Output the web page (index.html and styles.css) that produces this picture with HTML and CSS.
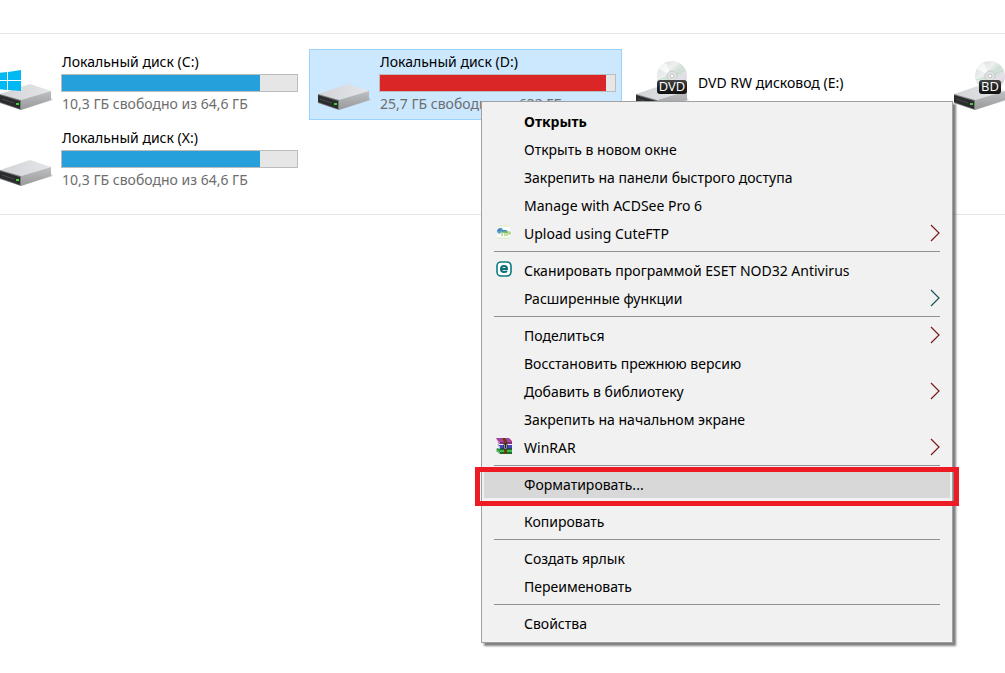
FILE: index.html
```
<!DOCTYPE html>
<html lang="ru">
<head>
<meta charset="utf-8">
<title>Этот компьютер</title>
<link rel="stylesheet" href="styles.css">
</head>
<body>
<svg class="defs" aria-hidden="true">
  <defs>
    <linearGradient id="side" x1="0" y1="0" x2="0" y2="1"><stop offset="0" stop-color="#bfc0c2"/><stop offset="1" stop-color="#98999b"/></linearGradient>
    <linearGradient id="top" x1="0" y1="0" x2="1" y2="0"><stop offset="0" stop-color="#d3d4d7"/><stop offset="1" stop-color="#e4e5e8"/></linearGradient>
    <linearGradient id="disc" x1="0" y1="0" x2="1" y2="1"><stop offset="0" stop-color="#d5d9d9"/><stop offset=".35" stop-color="#eef0f0"/><stop offset=".5" stop-color="#cfe0d6"/><stop offset=".7" stop-color="#e6dfea"/><stop offset="1" stop-color="#c4c8c8"/></linearGradient>
    <linearGradient id="badge" x1="0" y1="0" x2="0" y2="1"><stop offset="0" stop-color="#444"/><stop offset=".5" stop-color="#222"/><stop offset="1" stop-color="#111"/></linearGradient>
    <symbol id="drive" viewBox="0 0 54 52">
      <path d="M22 50l32-10-2-2z" fill="#999" opacity=".4"/>
      <path d="M1 34L31 24L52 31L22 40z" fill="url(#top)"/>
      <path d="M22 40L52 31V40L22 50z" fill="url(#side)"/>
      <path d="M1 34L22 40V50L1 43z" fill="#77797b"/>
      <path d="M1 35L21 41V49L1 42z" fill="#2b2c2d"/>
      <path d="M3 39L15 43" stroke="#484a4b"/>
      <rect x="17" y="43" width="3" height="2" fill="#3fd32f"/>
    </symbol>
    <symbol id="cd" viewBox="0 0 54 52">
      <circle cx="37" cy="16" r="15" fill="url(#disc)"/>
      <path d="M37 16L24 9Q27 4 31 3zM37 16L49 24Q45 29 42 30z" fill="#fff" opacity=".65"/>
      <path d="M37 16L51 10M37 16L23 20" stroke="#a8dfb8" opacity=".6"/>
      <circle cx="37" cy="16" r="5" fill="#e2e4e4" stroke="#c9cccc"/>
      <circle cx="37" cy="16" r="2" fill="#fff" stroke="#bbb"/>
    </symbol>
  </defs>
</svg>
<main class="explorer">
  <section class="drives">
    <article class="tile">
      <svg class="icon" viewBox="0 0 54 52" aria-hidden="true"><use href="#drive"/><path d="M-1 13L8 12V20H-1zM9 12L22 10V20H9zM-1 21H8V30L-1 29zM9 21H22V31L9 30z" fill="#00b9f2"/></svg>
      <div class="info"><h2 class="name">Локальный диск (C:)</h2><div class="bar"><span class="fill" style="width:84.4%"></span></div><p class="free">10,3 ГБ свободно из 64,6 ГБ</p></div>
    </article>
    <article class="tile selected">
      <svg class="icon" viewBox="0 0 54 52" aria-hidden="true"><use href="#drive"/></svg>
      <div class="info"><h2 class="name">Локальный диск (D:)</h2><div class="bar"><span class="fill full" style="width:96%"></span></div><p class="free">25,7 ГБ свободно из 632 ГБ</p></div>
    </article>
    <article class="tile">
      <svg class="icon" viewBox="0 0 54 52" aria-hidden="true"><use href="#drive"/><use href="#cd"/><rect x="22" y="20" width="30" height="14" rx="3" fill="url(#badge)"/><text class="label" x="37" y="31">DVD</text></svg>
      <div class="info"><h2 class="name">DVD RW дисковод (E:)</h2></div>
    </article>
    <article class="tile">
      <svg class="icon" viewBox="0 0 54 52" aria-hidden="true"><use href="#drive"/><use href="#cd"/><rect x="26" y="20" width="22" height="14" rx="3" fill="url(#badge)"/><text class="label" x="37" y="31">BD</text></svg>
    </article>
    <article class="tile">
      <svg class="icon" viewBox="0 0 54 52" aria-hidden="true"><use href="#drive"/></svg>
      <div class="info"><h2 class="name">Локальный диск (X:)</h2><div class="bar"><span class="fill" style="width:84.4%"></span></div><p class="free">10,3 ГБ свободно из 64,6 ГБ</p></div>
    </article>
  </section>

  <div class="menu" role="menu">
    <button class="item default" role="menuitem">Открыть</button>
    <button class="item" role="menuitem">Открыть в новом окне</button>
    <button class="item" role="menuitem">Закрепить на панели быстрого доступа</button>
    <button class="item" role="menuitem">Manage with ACDSee Pro 6</button>
    <button class="item" role="menuitem">
      <svg class="glyph" viewBox="0 0 16 16" aria-hidden="true"><path d="M1 2h13v12H1z" fill="#fbfdf8"/><path d="M1 2h13M1 14h13" stroke="#dcebc4"/><path d="M1 6q2-3 5-2l1 2h4l1 3H8L6 8 3 10 1 8z" fill="#5d9fd3"/><path d="M2 6h3M6 7h4" stroke="#2770b4"/><path d="M5 8h3M6 8v4M8 8h3M9 8v4M11 12V8h3v2h-2" stroke="#8bc34a" fill="none"/></svg>
      Upload using CuteFTP<svg class="arrow" viewBox="0 0 10 18" aria-hidden="true"><path d="M1 1l8 8-8 8"/></svg></button>
    <hr class="rule">
    <button class="item" role="menuitem">
      <svg class="glyph" viewBox="0 0 16 16" aria-hidden="true"><rect x="1" y="1" width="14" height="14" rx="4" fill="#fff" stroke="#0b7c83" stroke-width="1.6"/><path d="M5 8h6q0-3-3-3t-3 3q0 3 3 3 2 0 3-1" fill="none" stroke="#0b6d75" stroke-width="2"/></svg>
      Сканировать программой ESET NOD32 Antivirus</button>
    <button class="item" role="menuitem">Расширенные функции<svg class="arrow teal" viewBox="0 0 10 18" aria-hidden="true"><path d="M1 1l8 8-8 8"/></svg></button>
    <hr class="rule">
    <button class="item" role="menuitem">Поделиться<svg class="arrow" viewBox="0 0 10 18" aria-hidden="true"><path d="M1 1l8 8-8 8"/></svg></button>
    <button class="item" role="menuitem">Восстановить прежнюю версию</button>
    <button class="item" role="menuitem">Добавить в библиотеку<svg class="arrow" viewBox="0 0 10 18" aria-hidden="true"><path d="M1 1l8 8-8 8"/></svg></button>
    <button class="item" role="menuitem">Закрепить на начальном экране</button>
    <button class="item" role="menuitem">
      <svg class="glyph" viewBox="0 0 16 16" aria-hidden="true"><path d="M0 0h13l3 3v3H3z" fill="#a8449c"/><path d="M1 2l3 3h12" stroke="#5a1650" fill="none"/><path d="M1 6l2 1h13v4H4z" fill="#4747b8"/><path d="M0 7l4 3M0 6l4 3" stroke="#fff" stroke-width=".7"/><path d="M1 10l3 1h12v5H4L0 13z" fill="#259b35"/><path d="M4 11h12M4 15h12" stroke="#123e18"/><path d="M4 13h12" stroke="#4ee05e"/><path d="M0 12l4 3M0 1l4 4" stroke="#e9d5e9" stroke-width=".7"/><path d="M6 0h3l2 3v13H8V4z" fill="#6b3a18"/><path d="M8 6h3v5H8z" fill="#ddd" stroke="#222" stroke-width=".8"/><path d="M9.500 6v4" stroke="#222"/></svg>
      WinRAR<svg class="arrow" viewBox="0 0 10 18" aria-hidden="true"><path d="M1 1l8 8-8 8"/></svg></button>
    <hr class="rule">
    <button class="item active" role="menuitem">Форматировать...</button>
    <hr class="rule hidden">
    <button class="item" role="menuitem">Копировать</button>
    <hr class="rule">
    <button class="item" role="menuitem">Создать ярлык</button>
    <button class="item" role="menuitem">Переименовать</button>
    <hr class="rule">
    <button class="item" role="menuitem">Свойства</button>
  </div>
</main>
</body>
</html>
```
FILE: styles.css
```
* { box-sizing: border-box; }
body { margin: 0; background: #fff; color: #000; font: 14px/20px "Noto Sans", "Open Sans", sans-serif; }
.defs { display: block; width: 0; height: 0; }
.explorer { position: relative; min-height: 100vh; padding-top: 33px; overflow: hidden; }
.drives {
  display: grid; grid-template-columns: repeat(4, 313px); gap: 5px;
  margin-left: -9px; padding: 15px 0 18px;
  border: solid #e5e5e5; border-width: 1px 0;
}
.tile { display: flex; gap: 8px; height: 71px; padding: 0 5px 0 7px; border: 1px solid transparent; }
.tile.selected { background: #cce8ff; border-color: #99d1ff; }
.icon { flex: none; width: 54px; height: 52px; margin-top: 10px; overflow: visible; }
.label { fill: #fff; font: 13px "Open Sans", sans-serif; text-anchor: middle; }
.info { flex: 1; display: flex; flex-direction: column; justify-content: center; gap: 2px; padding-bottom: 4px; }
.name, .free { margin: 0; padding-left: 1px; font-size: 14px; font-weight: 400; white-space: nowrap; }
.free { color: #6d6d6d; }
.bar { display: flex; height: 18px; border: 1px solid #bcbcbc; background: #e6e6e6; }
.fill { background: #26a0da; }
.fill.full { background: #da2626; }

.menu {
  position: absolute; left: 481px; top: 101px; width: 472px;
  display: flex; flex-direction: column; padding: 5px 2px;
  background: #f1f1f1; border: 1px solid #a0a0a0;
  box-shadow: 3px 3px 2px rgba(0, 0, 0, .5);
}
.item {
  position: relative; display: flex; align-items: center; height: 28px;
  padding: 2px 10px 0 40px; border: 0; background: none;
  color: #000; font: inherit; text-align: left; white-space: nowrap;
}
.default { font-weight: 700; }
.glyph { position: absolute; left: 12px; top: 5px; width: 16px; height: 16px; }
.arrow { width: 10px; height: 18px; margin: 0 0 2px auto; fill: none; stroke: #7a1a1a; stroke-width: 1.2; }
.teal { stroke: #17565a; }
.rule { width: auto; height: 1px; margin: 4px 10px; border: 0; background: #919191; }
.hidden { visibility: hidden; }
.active { background: #d8d8d8; }
.active::after {
  content: ""; position: absolute; top: -3px; bottom: -8px; left: -9px; right: -9px;
  border: 5px solid #ed1c24;
}
```
